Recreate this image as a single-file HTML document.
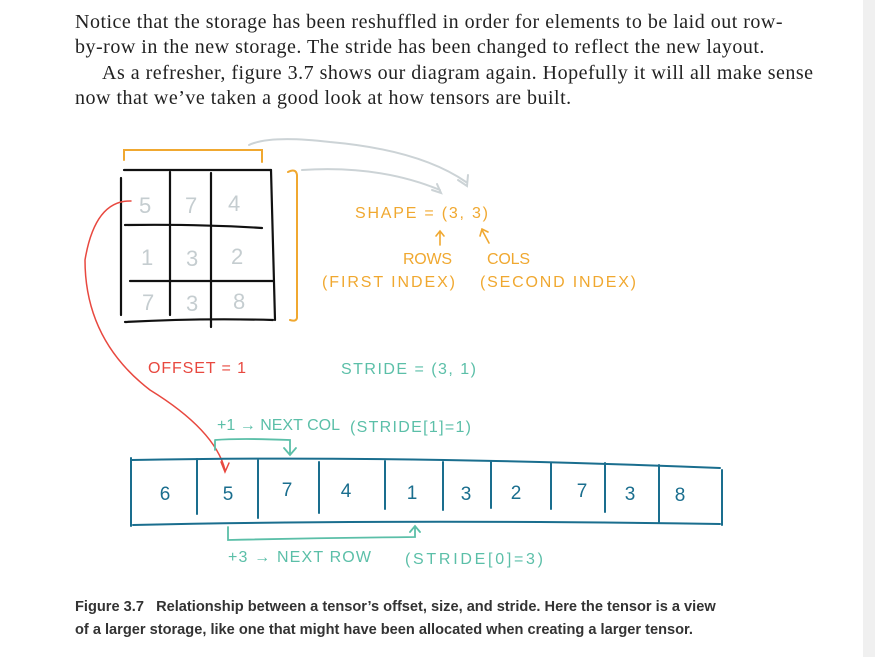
<!DOCTYPE html>
<html><head><meta charset="utf-8"><style>
body{margin:0;width:875px;height:657px;background:#fff;position:relative;overflow:hidden}
.side{position:absolute;left:863px;top:0;width:12px;height:657px;background:#f0f0f0}
.p{position:absolute;left:75px;font-family:"Liberation Serif",serif;font-size:20px;letter-spacing:0.5px;color:#222;white-space:nowrap}
.c{position:absolute;left:75px;font-family:"Liberation Sans",sans-serif;font-weight:bold;font-size:14.6px;color:#333;white-space:nowrap}
svg{position:absolute;left:0;top:0}
svg text{font-family:"Liberation Sans",sans-serif}
</style></head><body>
<div class="side"></div>
<div class="p" style="top:11px">Notice that the storage has been reshuffled in order for elements to be laid out row-</div>
<div class="p" style="top:36px">by-row in the new storage. The stride has been changed to reflect the new layout.</div>
<div class="p" style="top:62px;left:102px">As a refresher, figure 3.7 shows our diagram again. Hopefully it will all make sense</div>
<div class="p" style="top:87px">now that we’ve taken a good look at how tensors are built.</div>
<div class="c" style="top:599px">Figure 3.7&nbsp;&nbsp;&nbsp;Relationship between a tensor’s offset, size, and stride. Here the tensor is a view</div>
<div class="c" style="top:622px">of a larger storage, like one that might have been allocated when creating a larger tensor.</div>
<svg width="875" height="657" viewBox="0 0 875 657">
<g fill="none" stroke-linecap="round">
<path d="M124 160 V150 H262 V162" stroke="#f0a830" stroke-width="2"/>
<path d="M288 172 Q296 168 297 175 V318 Q296 322 290 320" stroke="#f0a830" stroke-width="2"/>
<path d="M249 145 Q270 135 330 142 Q420 150 466 182" stroke="#ccd3d6" stroke-width="2"/>
<path d="M458 180 L467 186 L468 175" stroke="#ccd3d6" stroke-width="2"/>
<path d="M302 170 Q380 165 440 190" stroke="#ccd3d6" stroke-width="2"/>
<path d="M432 190 L441 193 L437 184" stroke="#ccd3d6" stroke-width="2"/>
<g stroke="#111" stroke-width="2.2">
<path d="M124 170 H271"/><path d="M121 178 V315"/><path d="M271 170 L275 320"/>
<path d="M125 322 Q200 318 273 320"/>
<path d="M170 172 V315"/><path d="M211 173 V327"/>
<path d="M125 225 Q200 224 262 228"/><path d="M130 281 H273"/>
</g>
<path d="M131 201 Q95 200 85 260 Q85 340 150 390 Q215 430 225 470" stroke="#e8483f" stroke-width="1.5"/>
<path d="M221 462 L225 472 L229 463" stroke="#e8483f" stroke-width="1.5"/>
<path d="M440 245 V232 M436 236 L440 231 L444 236" stroke="#f0a830" stroke-width="1.6"/>
<path d="M489 243 L482 230 M480 236 L482 229 L488 232" stroke="#f0a830" stroke-width="1.6"/>
<g stroke="#1a6e8e" stroke-width="2">
<path d="M132 460 Q400 455 720 468"/><path d="M133 525 Q400 519 720 524"/>
<path d="M131 458 V526"/><path d="M722 470 V525"/>
<path d="M197 459 V514"/><path d="M258 460 V518"/><path d="M319 462 V513"/><path d="M385 461 V509"/>
<path d="M443 462 V510"/><path d="M491 462 V508"/><path d="M551 463 V509"/><path d="M605 463 V512"/>
<path d="M659 465 V523"/>
</g>
<path d="M215 441 V450 M215 440 Q240 438 290 440 V455 M284 448 L290 455 L296 448" stroke="#5bbfa8" stroke-width="1.8"/>
<path d="M228 527 V540 Q320 538 415 537 V527 M410 532 L415 526 L420 532" stroke="#5bbfa8" stroke-width="1.8"/>
</g>
<g font-size="22" fill="#c5cdd0">
<text x="139" y="213">5</text><text x="185" y="213">7</text><text x="228" y="211">4</text>
<text x="141" y="265">1</text><text x="186" y="266">3</text><text x="231" y="264">2</text>
<text x="142" y="310">7</text><text x="186" y="311">3</text><text x="233" y="309">8</text>
</g>
<g font-size="16" fill="#f0a830">
<text x="355" y="218" textLength="133">SHAPE = (3, 3)</text>
<text x="403" y="264" textLength="49">ROWS</text><text x="487" y="264" textLength="43">COLS</text>
<text x="322" y="287" textLength="133">(FIRST INDEX)</text><text x="480" y="287" textLength="156">(SECOND INDEX)</text>
</g>
<text x="148" y="373" font-size="16" fill="#e8483f" textLength="98">OFFSET = 1</text>
<g fill="#5bbfa8" font-size="16">
<text x="341" y="374" textLength="135">STRIDE = (3, 1)</text>
<text x="217" y="430" textLength="123">+1 → NEXT COL</text><text x="350" y="432" textLength="121">(STRIDE[1]=1)</text>
<text x="228" y="562" textLength="143">+3 → NEXT ROW</text><text x="405" y="564" textLength="138">(STRIDE[0]=3)</text>
</g>
<g fill="#1a6e8e" font-size="19" text-anchor="middle">
<text x="165" y="500">6</text><text x="228" y="500">5</text><text x="287" y="496">7</text><text x="346" y="497">4</text>
<text x="412" y="499">1</text><text x="466" y="500">3</text><text x="516" y="499">2</text><text x="582" y="497">7</text>
<text x="630" y="500">3</text><text x="680" y="501">8</text>
</g>
</svg>
</body></html>
